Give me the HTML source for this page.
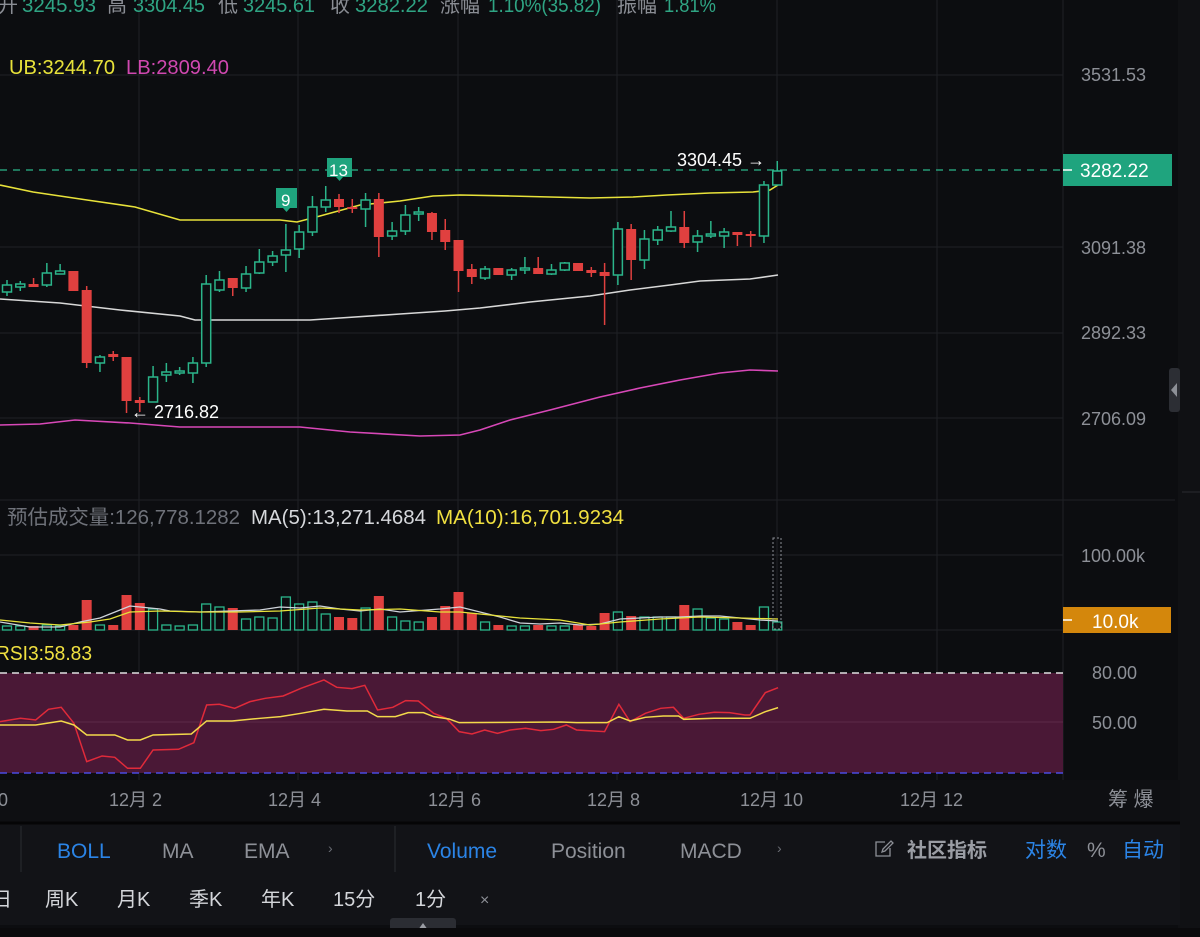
<!DOCTYPE html>
<html><head><meta charset="utf-8">
<style>
html,body{margin:0;padding:0;background:#0c0d10;}
body{width:1200px;height:937px;overflow:hidden;position:relative;font-family:"Liberation Sans","Noto Sans CJK SC",sans-serif;}
svg{position:absolute;left:0;top:0}
text{font-family:"Liberation Sans","Noto Sans CJK SC",sans-serif;}
</style></head>
<body>
<svg id="s" width="1200" height="937" viewBox="0 0 1200 937" xmlns="http://www.w3.org/2000/svg">
<rect x="0" y="0" width="1200" height="937" fill="#0c0d10"/>
<rect x="1178" y="0" width="22" height="937" fill="#101114"/>
<line x1="1182" y1="492" x2="1200" y2="492" stroke="#2a2c31"/>
<rect x="1169" y="368" width="11" height="44" rx="3" fill="#2c2e34"/>
<polygon points="1177,383 1177,397 1171,390" fill="#8d9097"/>
<g stroke="#1f2126" stroke-width="1">
<line x1="139" y1="0" x2="139" y2="780"/><line x1="298" y1="0" x2="298" y2="780"/>
<line x1="458" y1="0" x2="458" y2="780"/><line x1="617" y1="0" x2="617" y2="780"/>
<line x1="777" y1="0" x2="777" y2="780"/><line x1="937" y1="0" x2="937" y2="780"/>
<line x1="0" y1="75" x2="1063" y2="75"/><line x1="0" y1="247" x2="1063" y2="247"/>
<line x1="0" y1="333" x2="1063" y2="333"/><line x1="0" y1="418" x2="1063" y2="418"/>
<line x1="0" y1="500" x2="1175" y2="500"/><line x1="0" y1="555" x2="1063" y2="555"/>
<line x1="0" y1="630" x2="1063" y2="630"/><line x1="0" y1="722" x2="1063" y2="722"/>
<line x1="1063" y1="0" x2="1063" y2="780"/>
</g>
<rect x="0" y="673" width="1063" height="100" fill="#4a1836"/>
<line x1="0" y1="722" x2="1063" y2="722" stroke="#5c2a48"/>
<line x1="0" y1="673" x2="1063" y2="673" stroke="#e0e0e0" stroke-dasharray="7,5" stroke-width="1.5"/>
<line x1="0" y1="773" x2="1063" y2="773" stroke="#4a4ae0" stroke-dasharray="7,5" stroke-width="1.5"/>
<g transform="translate(0,500) scale(0.5102,0.3333)" fill="none" stroke-width="1.5">
<polyline vector-effect="non-scaling-stroke" stroke="#e02a3a" points="0,665 40,655 70,660 95,628 120,622 145,670 170,785 200,768 225,772 250,805 275,805 300,750 350,748 380,728 405,615 430,613 460,625 490,605 520,595 555,588 590,565 635,540 660,562 690,566 715,556 740,630 770,622 795,602 820,603 850,640 875,655 900,695 925,702 950,690 975,700 1000,690 1030,685 1060,692 1085,688 1110,675 1130,690 1185,695 1213,613 1235,665 1265,640 1295,625 1320,622 1340,655 1370,643 1400,637 1430,638 1460,645 1470,645 1500,578 1525,563"/>
<polyline vector-effect="non-scaling-stroke" stroke="#f3d94a" points="0,675 70,675 120,663 145,675 170,705 225,705 250,720 275,720 300,705 375,702 405,663 455,663 510,655 550,650 590,640 635,628 680,633 720,633 740,650 775,650 800,638 830,638 850,650 880,657 900,668 1100,666 1130,668 1190,668 1213,650 1235,663 1265,652 1300,648 1330,648 1340,658 1400,655 1470,655 1500,635 1525,623"/>
</g>
<g fill="none" stroke-width="1.6">
<polyline stroke="#e8e23a" points="0,185 33,192 87,200 135,207 180,220 280,220 297,222 320,216 360,205 400,201 433,196 460,195 510,196 590,198 633,197 667,195 710,193 753,192 770,190 778,185"/>
<polyline stroke="#d8d8d8" points="0,299 60,303 120,310 180,316 195,320 310,320 340,318 400,314 445,311 480,308 530,302 590,296 630,290 670,285 700,281 750,279 778,275"/>
<polyline stroke="#d848b8" points="0,425 40,424 75,420 130,423 180,427 300,427 350,432 420,436 460,435 480,430 510,420 550,410 600,397 640,388 680,380 720,373 750,370 778,371"/>
</g>
<g id="candles"></g>
<g id="vols"></g>
<g fill="none" stroke-width="1.3">
<polyline stroke="#cfd3da" points="0,622 30,627 60,627 80,622 100,618 120,610 130,606 140,607 160,609 170,611 200,612 230,611 260,610 280,607 300,608 320,606 340,609 360,611 380,609 400,612 440,609 460,607 480,612 500,617 520,623 540,624 560,623 580,625 600,624 620,619 640,618 660,617 680,617 700,616 720,616 740,618 760,620 778,621"/>
<polyline stroke="#e8e23a" points="0,620 30,623 60,625 90,622 110,619 130,612 160,611 200,612 240,612 280,611 320,608 360,610 400,609 440,612 460,612 480,614 520,618 560,620 590,625 620,622 660,619 700,617 740,618 778,619"/>
</g>
<rect x="773" y="538" width="8" height="91" fill="none" stroke="#8a8d94" stroke-dasharray="2,2" stroke-width="1"/>
<line x1="0" y1="170" x2="1063" y2="170" stroke="#2bb58a" stroke-dasharray="7,6" stroke-width="1.3"/>
<rect x="1063" y="154" width="109" height="32" fill="#1fa47e"/>
<line x1="1063" y1="170" x2="1072" y2="170" stroke="#fff" stroke-width="1.5"/>
<text x="1080" y="177" fill="#fff" font-size="19">3282.22</text>
<rect x="1063" y="607" width="108" height="26" fill="#d4870c"/>
<line x1="1063" y1="620" x2="1072" y2="620" stroke="#fff" stroke-width="1.5"/>
<text x="1092" y="628" fill="#fff" font-size="19">10.0k</text>
<path d="M276,188 h21 v20 h-7 l-3.5,4 l-3.5,-4 h-7 z" fill="#1fa47e"/>
<text x="281" y="206" fill="#fff" font-size="17">9</text>
<path d="M327,158 h25 v19 h-9 l-3.5,4 l-3.5,-4 h-9 z" fill="#1fa47e"/>
<text x="329" y="176" fill="#fff" font-size="17">13</text>
<text x="677" y="166" fill="#fff" font-size="18">3304.45 →</text>
<text x="131" y="418" fill="#fff" font-size="18">← 2716.82</text>
<g fill="#8d9097" font-size="18">
<text x="1081" y="81">3531.53</text><text x="1081" y="254">3091.38</text>
<text x="1081" y="339">2892.33</text><text x="1081" y="425">2706.09</text>
<text x="1081" y="562">100.00k</text><text x="1092" y="679">80.00</text><text x="1092" y="729">50.00</text>
</g>
<g font-size="20">
<text x="-2" y="12" fill="#8a8d94">开</text>
<text x="22" y="12" fill="#2fa584" textLength="74" lengthAdjust="spacingAndGlyphs">3245.93</text>
<text x="107" y="12" fill="#8a8d94">高</text>
<text x="133" y="12" fill="#2fa584" textLength="72" lengthAdjust="spacingAndGlyphs">3304.45</text>
<text x="218" y="12" fill="#8a8d94">低</text>
<text x="243" y="12" fill="#2fa584" textLength="72" lengthAdjust="spacingAndGlyphs">3245.61</text>
<text x="330" y="12" fill="#8a8d94">收</text>
<text x="355" y="12" fill="#2fa584" textLength="73" lengthAdjust="spacingAndGlyphs">3282.22</text>
<text x="440" y="12" fill="#8a8d94">涨幅</text>
<text x="488" y="12" fill="#2fa584" textLength="113" lengthAdjust="spacingAndGlyphs">1.10%(35.82)</text>
<text x="617" y="12" fill="#8a8d94">振幅</text>
<text x="664" y="12" fill="#2fa584" textLength="52" lengthAdjust="spacingAndGlyphs">1.81%</text>
<text x="9" y="74" fill="#e8e23a" textLength="106" lengthAdjust="spacingAndGlyphs">UB:3244.70</text>
<text x="126" y="74" fill="#d048b0" textLength="103" lengthAdjust="spacingAndGlyphs">LB:2809.40</text>
<text x="7" y="524" fill="#6f727a" textLength="233" lengthAdjust="spacingAndGlyphs">预估成交量:126,778.1282</text>
<text x="251" y="524" fill="#d6d8dc" textLength="175" lengthAdjust="spacingAndGlyphs">MA(5):13,271.4684</text>
<text x="436" y="524" fill="#f0e040" textLength="188" lengthAdjust="spacingAndGlyphs">MA(10):16,701.9234</text>
<text x="-4" y="660" fill="#f0e040" textLength="96" lengthAdjust="spacingAndGlyphs">RSI3:58.83</text>
</g>
<rect x="0" y="780" width="1180" height="42" fill="#0e0f12"/>
<g fill="#8d9097" font-size="18">
<text x="-12" y="806">30</text><text x="109" y="806">12月 2</text><text x="268" y="806">12月 4</text>
<text x="428" y="806">12月 6</text><text x="587" y="806">12月 8</text><text x="740" y="806">12月 10</text>
<text x="900" y="806">12月 12</text><text x="1108" y="806" font-size="20">筹 爆</text>
</g>
<rect x="0" y="824" width="1180" height="101" fill="#121317"/>
<line x1="0" y1="823" x2="1180" y2="823" stroke="#050506" stroke-width="3"/>
<line x1="21" y1="826" x2="21" y2="872" stroke="#2a2c31"/>
<line x1="395" y1="826" x2="395" y2="872" stroke="#2a2c31"/>
<g font-size="21">
<text x="57" y="858" fill="#2b84e6">BOLL</text><text x="162" y="858" fill="#8d9097">MA</text>
<text x="244" y="858" fill="#8d9097">EMA</text><text x="328" y="853" fill="#6a6d74" font-size="14">›</text>
<text x="427" y="858" fill="#2b84e6">Volume</text><text x="551" y="858" fill="#8d9097">Position</text>
<text x="680" y="858" fill="#8d9097">MACD</text><text x="777" y="853" fill="#6a6d74" font-size="14">›</text>
<text x="907" y="857" fill="#9a9da4" font-weight="bold" font-size="20">社区指标</text>
<text x="1025" y="857" fill="#2b84e6">对数</text><text x="1087" y="857" fill="#8d9097">%</text>
<text x="1122" y="857" fill="#2b84e6">自动</text>
</g>
<g fill="none" stroke="#8d9097" stroke-width="1.3">
<path d="M885,842 h-9 v14 h14 v-8"/><path d="M882,852 l1,-3 l8,-8 l2,2 l-8,8 z"/>
</g>
<g fill="#d4d6da" font-size="20">
<text x="-8" y="906">日</text><text x="45" y="906">周K</text><text x="117" y="906">月K</text>
<text x="189" y="906">季K</text><text x="261" y="906">年K</text><text x="333" y="906">15分</text>
<text x="415" y="906">1分</text><text x="480" y="905" fill="#8d9097" font-size="16">×</text>
</g>
<rect x="390" y="918" width="66" height="16" rx="3" fill="#2b2d33"/>
<polygon points="423,923 428,930 418,930" fill="#9a9da4"/>
<rect x="0" y="928" width="1200" height="9" fill="#0a0a0c"/>
</svg>
<script>
var C=[["g",285,292,280,296],["g",284,287,281,291],["r",284,287,278,287],["g",273,285,263,287],["g",271,274,264,274],["r",271,291,271,291],["r",290,363,286,368],["g",357,363,355,372],["r",354,357,351,361],["r",357,401,357,413],["r",400,403,397,412],["g",377,402,366,402],["g",372,375,363,382],["g",371,373,367,375],["g",363,373,357,383],["g",284,363,275,367],["g",280,290,271,292],["r",278,288,278,296],["g",274,288,266,292],["g",262,273,249,274],["g",256,262,251,266],["g",250,255,224,272],["g",232,249,225,258],["g",207,232,196,236],["g",200,207,186,212],["r",199,207,194,213],["r",207,209,199,213],["g",200,209,193,227],["r",199,237,193,257],["g",231,236,222,240],["g",215,231,205,235],["g",212,214,207,221],["r",213,232,212,240],["r",230,242,219,250],["r",240,271,240,292],["r",269,277,264,284],["g",269,278,266,280],["r",268,275,268,275],["g",270,275,268,280],["g",268,270,257,274],["r",268,274,257,274],["g",270,274,264,275],["g",263,270,262,271],["r",263,271,263,271],["r",270,273,267,277],["r",272,276,263,325],["g",229,275,222,285],["r",229,260,224,280],["g",239,260,230,269],["g",230,240,226,245],["g",227,231,211,232],["r",227,243,211,248],["g",236,242,230,252],["g",234,236,221,238],["g",232,236,228,248],["r",232,235,232,246],["r",234,236,231,247],["g",185,236,181,243],["g",171,185,161,185]];
var V=[4,4,4,5,4,5,30,5,5,35,27,21,5,4,5,26,23,22,11,13,12,33,26,28,16,13,12,22,34,13,9,8,13,24,38,17,8,5,4,4,5,4,4,5,4,17,18,14,13,13,13,25,21,12,11,8,5,23,8];
var g=document.getElementById("candles"),vg=document.getElementById("vols"),h="",vh="";
for(var i=0;i<C.length;i++){var c=C[i],x=7+13.28*i,col=c[0]=="g"?"#2bb58a":"#e0403f";
h+='<line x1="'+x+'" y1="'+c[3]+'" x2="'+x+'" y2="'+c[4]+'" stroke="'+col+'" stroke-width="1.5"/>';
var bh=Math.max(c[2]-c[1],2);
if(c[0]=="g")h+='<rect x="'+(x-4.5)+'" y="'+c[1]+'" width="9" height="'+bh+'" fill="#0c0d10" stroke="'+col+'" stroke-width="1.5"/>';
else h+='<rect x="'+(x-5)+'" y="'+c[1]+'" width="10" height="'+bh+'" fill="'+col+'"/>';
var t=630-V[i];
if(c[0]=="g")vh+='<rect x="'+(x-4.5)+'" y="'+t+'" width="9" height="'+V[i]+'" fill="none" stroke="'+col+'" stroke-width="1.3"/>';
else vh+='<rect x="'+(x-5)+'" y="'+t+'" width="10" height="'+V[i]+'" fill="'+col+'"/>';}
g.innerHTML=h;vg.innerHTML=vh;
</script>
</body></html>
